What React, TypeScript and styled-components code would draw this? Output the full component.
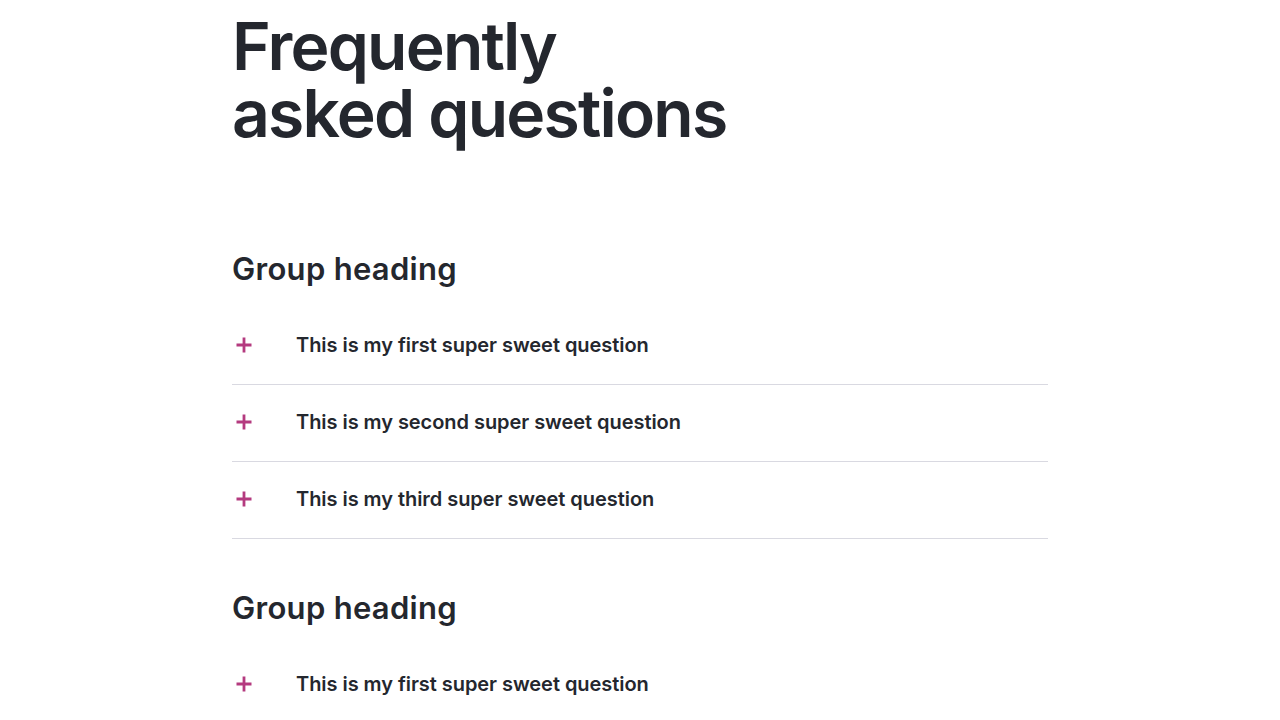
import React from "react";
import styled, { createGlobalStyle } from "styled-components";

const Global = createGlobalStyle`
  html, body { margin: 0; padding: 0; background: #ffffff; }
  body { font-family: Inter, "Noto Sans", sans-serif; color: #24272e; }
`;

const Page = styled.main`
  width: 816px;
  margin: 0 auto;
  padding-top: 13px;
`;

const Title = styled.h1`
  margin: 0;
  font-size: 66px;
  line-height: 67px;
  font-weight: 600;
  letter-spacing: -1.8px;
  color: #24272e;
`;

const Group = styled.section<{ $first?: boolean }>`
  margin-top: ${(p) => (p.$first ? "104px" : "51px")};
`;

const GroupHeading = styled.h2`
  margin: 0 0 21px;
  font-size: 31px;
  line-height: 36px;
  font-weight: 600;
  letter-spacing: 0.3px;
  color: #24272e;
`;

const List = styled.ul`
  list-style: none;
  margin: 0;
  padding: 0;
`;

const Item = styled.li`
  border-bottom: 1px solid #d9d9e1;
`;

const Trigger = styled.button`
  display: flex;
  align-items: center;
  width: 100%;
  padding: 23px 0 25px;
  border: 0;
  background: none;
  cursor: pointer;
  text-align: left;
  font: inherit;
`;

const IconBox = styled.span`
  display: flex;
  align-items: center;
  justify-content: center;
  width: 24px;
  height: 28px;
  margin-right: 40px;
`;

const Question = styled.span`
  font-size: 20px;
  line-height: 28px;
  font-weight: 600;
  letter-spacing: -0.05px;
  color: #24272e;
`;

const Plus = () => (
  <svg width="18" height="18" viewBox="0 0 18 18" aria-hidden="true">
    <path d="M9 1.5v15M1.5 9h15" stroke="#b43a7f" strokeWidth="2.8" fill="none" />
  </svg>
);

const groups = [
  {
    heading: "Group heading",
    questions: [
      "This is my first super sweet question",
      "This is my second super sweet question",
      "This is my third super sweet question",
    ],
  },
  {
    heading: "Group heading",
    questions: [
      "This is my first super sweet question",
      "This is my second super sweet question",
      "This is my third super sweet question",
    ],
  },
];

export default function App() {
  return (
    <>
      <Global />
      <Page>
        <Title>
          Frequently
          <br />
          asked questions
        </Title>
        {groups.map((g, gi) => (
          <Group key={gi} $first={gi === 0}>
            <GroupHeading>{g.heading}</GroupHeading>
            <List>
              {g.questions.map((q, qi) => (
                <Item key={qi}>
                  <Trigger type="button">
                    <IconBox>
                      <Plus />
                    </IconBox>
                    <Question>{q}</Question>
                  </Trigger>
                </Item>
              ))}
            </List>
          </Group>
        ))}
      </Page>
    </>
  );
}
